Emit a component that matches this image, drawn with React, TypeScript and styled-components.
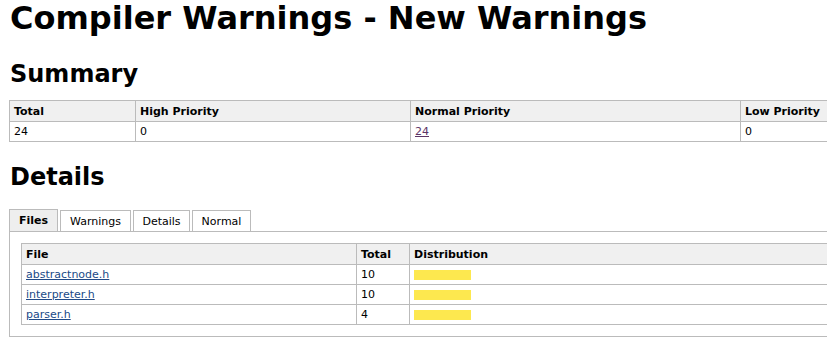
import React from "react";
import styled, { createGlobalStyle } from "styled-components";

const GlobalStyle = createGlobalStyle`
  html, body {
    margin: 0;
    padding: 0;
    background: #fff;
    overflow: hidden;
  }
  body {
    font-family: "DejaVu Sans", Verdana, sans-serif;
    font-size: 11px;
    color: #000;
  }
`;

const Page = styled.div`
  width: 991px;
  padding: 0 0 0 9px;
`;

const Title = styled.h1`
  font-size: 32px;
  font-weight: bold;
  margin: 0;
  padding-left: 1px;
  line-height: 36px;
`;

const SectionTitle = styled.h2<{ $top: number }>`
  font-size: 24px;
  font-weight: bold;
  margin: ${(p) => p.$top}px 0 0;
  padding-left: 1px;
  line-height: 28px;
`;

const Grid = styled.table<{ $top?: number }>`
  border-collapse: collapse;
  border: 1px solid #bbb;
  width: 100%;
  table-layout: fixed;
  margin-top: ${(p) => p.$top ?? 0}px;
  th, td {
    border: 1px solid #bbb;
    text-align: left;
    padding: 0 4px;
    vertical-align: middle;
    white-space: nowrap;
    overflow: hidden;
  }
  th {
    background: #f0f0f0;
    font-weight: bold;
    height: 20px;
  }
  td {
    height: 19px;
  }
`;

const Col = styled.col<{ $w: number }>`
  width: ${(p) => p.$w}px;
`;

const Link = styled.a<{ $visited?: boolean }>`
  color: ${(p) => (p.$visited ? "#5c3566" : "#204a87")};
  text-decoration: underline;
`;

const TabBar = styled.div`
  display: flex;
  gap: 2px;
  align-items: flex-end;
  margin-top: 17px;
  height: 23px;
`;

const Tab = styled.div<{ $active?: boolean; $w: number }>`
  display: flex;
  align-items: center;
  justify-content: center;
  width: ${(p) => p.$w}px;
  border: 1px solid #bbb;
  border-bottom: none;
  background: ${(p) => (p.$active ? "#eee" : "#fff")};
  font-weight: ${(p) => (p.$active ? "bold" : "normal")};
  height: ${(p) => (p.$active ? 22 : 21)}px;
  box-sizing: border-box;
`;

const Panel = styled.div`
  border: 1px solid #bbb;
  padding: 11px;
`;

const Bar = styled.div<{ $w: number }>`
  width: ${(p) => p.$w}px;
  height: 10px;
  background: #fde84f;
`;

const Summary = () => (
  <Grid $top={12}>
    <colgroup>
      <Col $w={126} />
      <Col $w={275} />
      <Col $w={330} />
      <Col $w={260} />
    </colgroup>
    <thead>
      <tr>
        <th>Total</th>
        <th>High Priority</th>
        <th>Normal Priority</th>
        <th>Low Priority</th>
      </tr>
    </thead>
    <tbody>
      <tr>
        <td>24</td>
        <td>0</td>
        <td>
          <Link href="#" $visited>24</Link>
        </td>
        <td>0</td>
      </tr>
    </tbody>
  </Grid>
);

const files = [
  { name: "abstractnode.h", total: 10 },
  { name: "interpreter.h", total: 10 },
  { name: "parser.h", total: 4 },
];

const tabs = [
  { label: "Files", w: 49 },
  { label: "Warnings", w: 71 },
  { label: "Details", w: 57 },
  { label: "Normal", w: 59 },
];

export default function App() {
  return (
    <>
      <GlobalStyle />
      <Page>
        <Title>Compiler Warnings - New Warnings</Title>
        <SectionTitle $top={24}>Summary</SectionTitle>
        <Summary />
        <SectionTitle $top={21}>Details</SectionTitle>
        <TabBar>
          {tabs.map((t, i) => (
            <Tab key={t.label} $w={t.w} $active={i === 0}>
              {t.label}
            </Tab>
          ))}
        </TabBar>
        <Panel>
          <Grid>
            <colgroup>
              <Col $w={335} />
              <Col $w={53} />
              <Col $w={579} />
            </colgroup>
            <thead>
              <tr>
                <th>File</th>
                <th>Total</th>
                <th>Distribution</th>
              </tr>
            </thead>
            <tbody>
              {files.map((f) => (
                <tr key={f.name}>
                  <td>
                    <Link href="#">{f.name}</Link>
                  </td>
                  <td>{f.total}</td>
                  <td>
                    <Bar $w={57} />
                  </td>
                </tr>
              ))}
            </tbody>
          </Grid>
        </Panel>
      </Page>
    </>
  );
}
